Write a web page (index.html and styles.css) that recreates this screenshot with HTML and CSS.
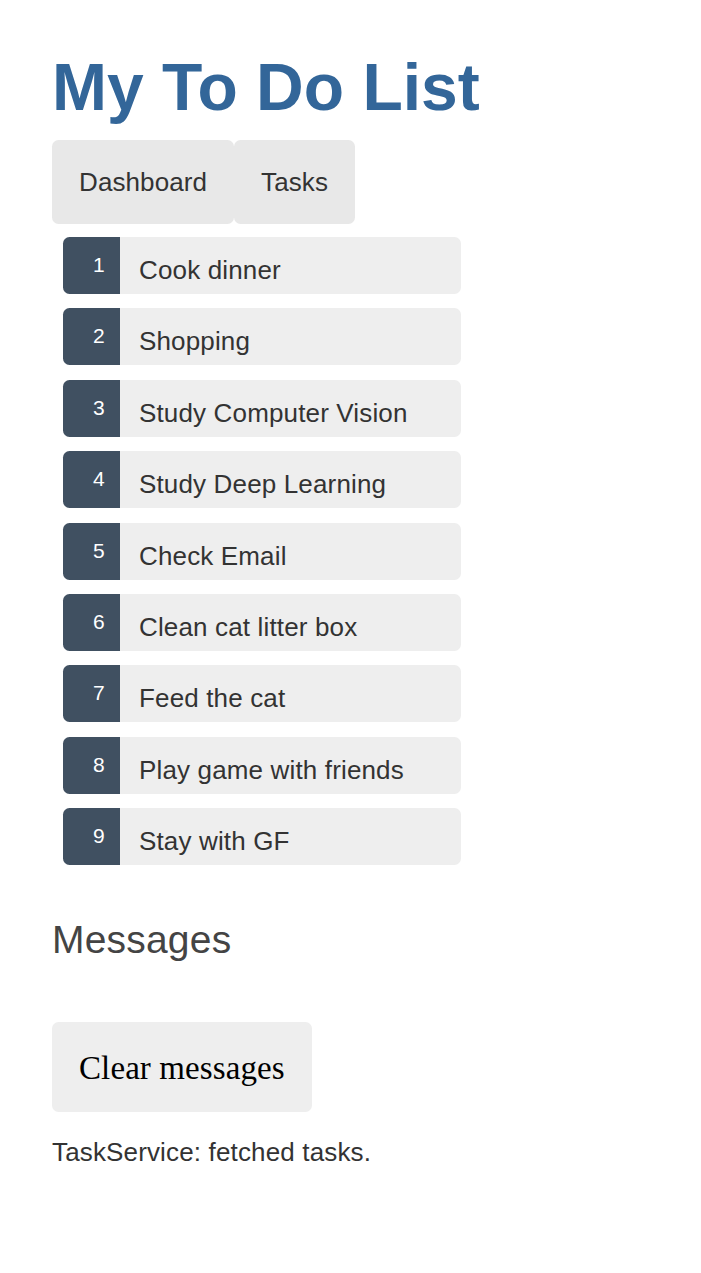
FILE: index.html
```html
<!DOCTYPE html>
<html lang="en">
<head>
<meta charset="utf-8">
<title>My To Do List</title>
<link rel="stylesheet" href="styles.css">
</head>
<body>
<div class="page">
  <h1 class="title">My To Do List</h1>
  <nav class="nav"><a class="nav-link" href="#">Dashboard</a><a class="nav-link" href="#">Tasks</a></nav>
  <ul class="tasks">
    <li class="task"><span class="badge">1</span><span class="task-name">Cook dinner</span></li>
    <li class="task"><span class="badge">2</span><span class="task-name">Shopping</span></li>
    <li class="task"><span class="badge">3</span><span class="task-name">Study Computer Vision</span></li>
    <li class="task"><span class="badge">4</span><span class="task-name">Study Deep Learning</span></li>
    <li class="task"><span class="badge">5</span><span class="task-name">Check Email</span></li>
    <li class="task"><span class="badge">6</span><span class="task-name">Clean cat litter box</span></li>
    <li class="task"><span class="badge">7</span><span class="task-name">Feed the cat</span></li>
    <li class="task"><span class="badge">8</span><span class="task-name">Play game with friends</span></li>
    <li class="task"><span class="badge">9</span><span class="task-name">Stay with GF</span></li>
  </ul>
  <h2 class="messages-title">Messages</h2>
  <button class="clear-btn" type="button">Clear messages</button>
  <p class="message">TaskService: fetched tasks.</p>
</div>
</body>
</html>
```

FILE: styles.css
```css
html, body {
  margin: 0;
  padding: 0;
  background: #ffffff;
}

.page {
  padding: 50px 52px 0;
  font-family: "Liberation Sans", Arial, sans-serif;
  color: #333333;
}

.title {
  margin: 0;
  font-size: 66px;
  line-height: 75px;
  font-weight: bold;
  color: #336699;
}

.nav {
  display: flex;
  margin-top: 15px;
}

.nav-link {
  display: block;
  padding: 27px;
  font-size: 26px;
  line-height: 30px;
  letter-spacing: 0.1px;
  color: #333333;
  background-color: #e8e8e8;
  border-radius: 6.5px;
  text-decoration: none;
}

.tasks {
  list-style: none;
  margin: 13px 0 0;
  padding: 0;
  display: flex;
  flex-direction: column;
  gap: 14.4px;
}

.task {
  display: flex;
  width: 398px;
  height: 57px;
  margin-left: 11px;
  background-color: #eeeeee;
  border-radius: 6.5px;
}

.badge {
  box-sizing: border-box;
  width: 57px;
  height: 57px;
  padding: 17px 0 0 30px;
  font-size: 21px;
  line-height: 21px;
  color: #ffffff;
  background-color: #405061;
  border-radius: 6.5px 0 0 6.5px;
}

.task-name {
  padding: 20px 0 0 19px;
  font-size: 26px;
  line-height: 26px;
  letter-spacing: 0.15px;
  color: #333333;
}

.messages-title {
  margin: 52px 0 0;
  font-size: 39px;
  line-height: 45px;
  font-weight: normal;
  letter-spacing: 0.2px;
  color: #444444;
}

.clear-btn {
  display: block;
  box-sizing: border-box;
  margin-top: 60px;
  height: 90px;
  padding: 3px 27px 0;
  font-family: "Liberation Serif", "Times New Roman", serif;
  font-size: 33px;
  line-height: 87px;
  letter-spacing: 0.1px;
  color: #000000;
  background-color: #eeeeee;
  border: none;
  border-radius: 6.5px;
}

.message {
  margin: 25px 0 0;
  font-size: 26px;
  line-height: 30px;
  letter-spacing: 0.15px;
  color: #333333;
}
```
